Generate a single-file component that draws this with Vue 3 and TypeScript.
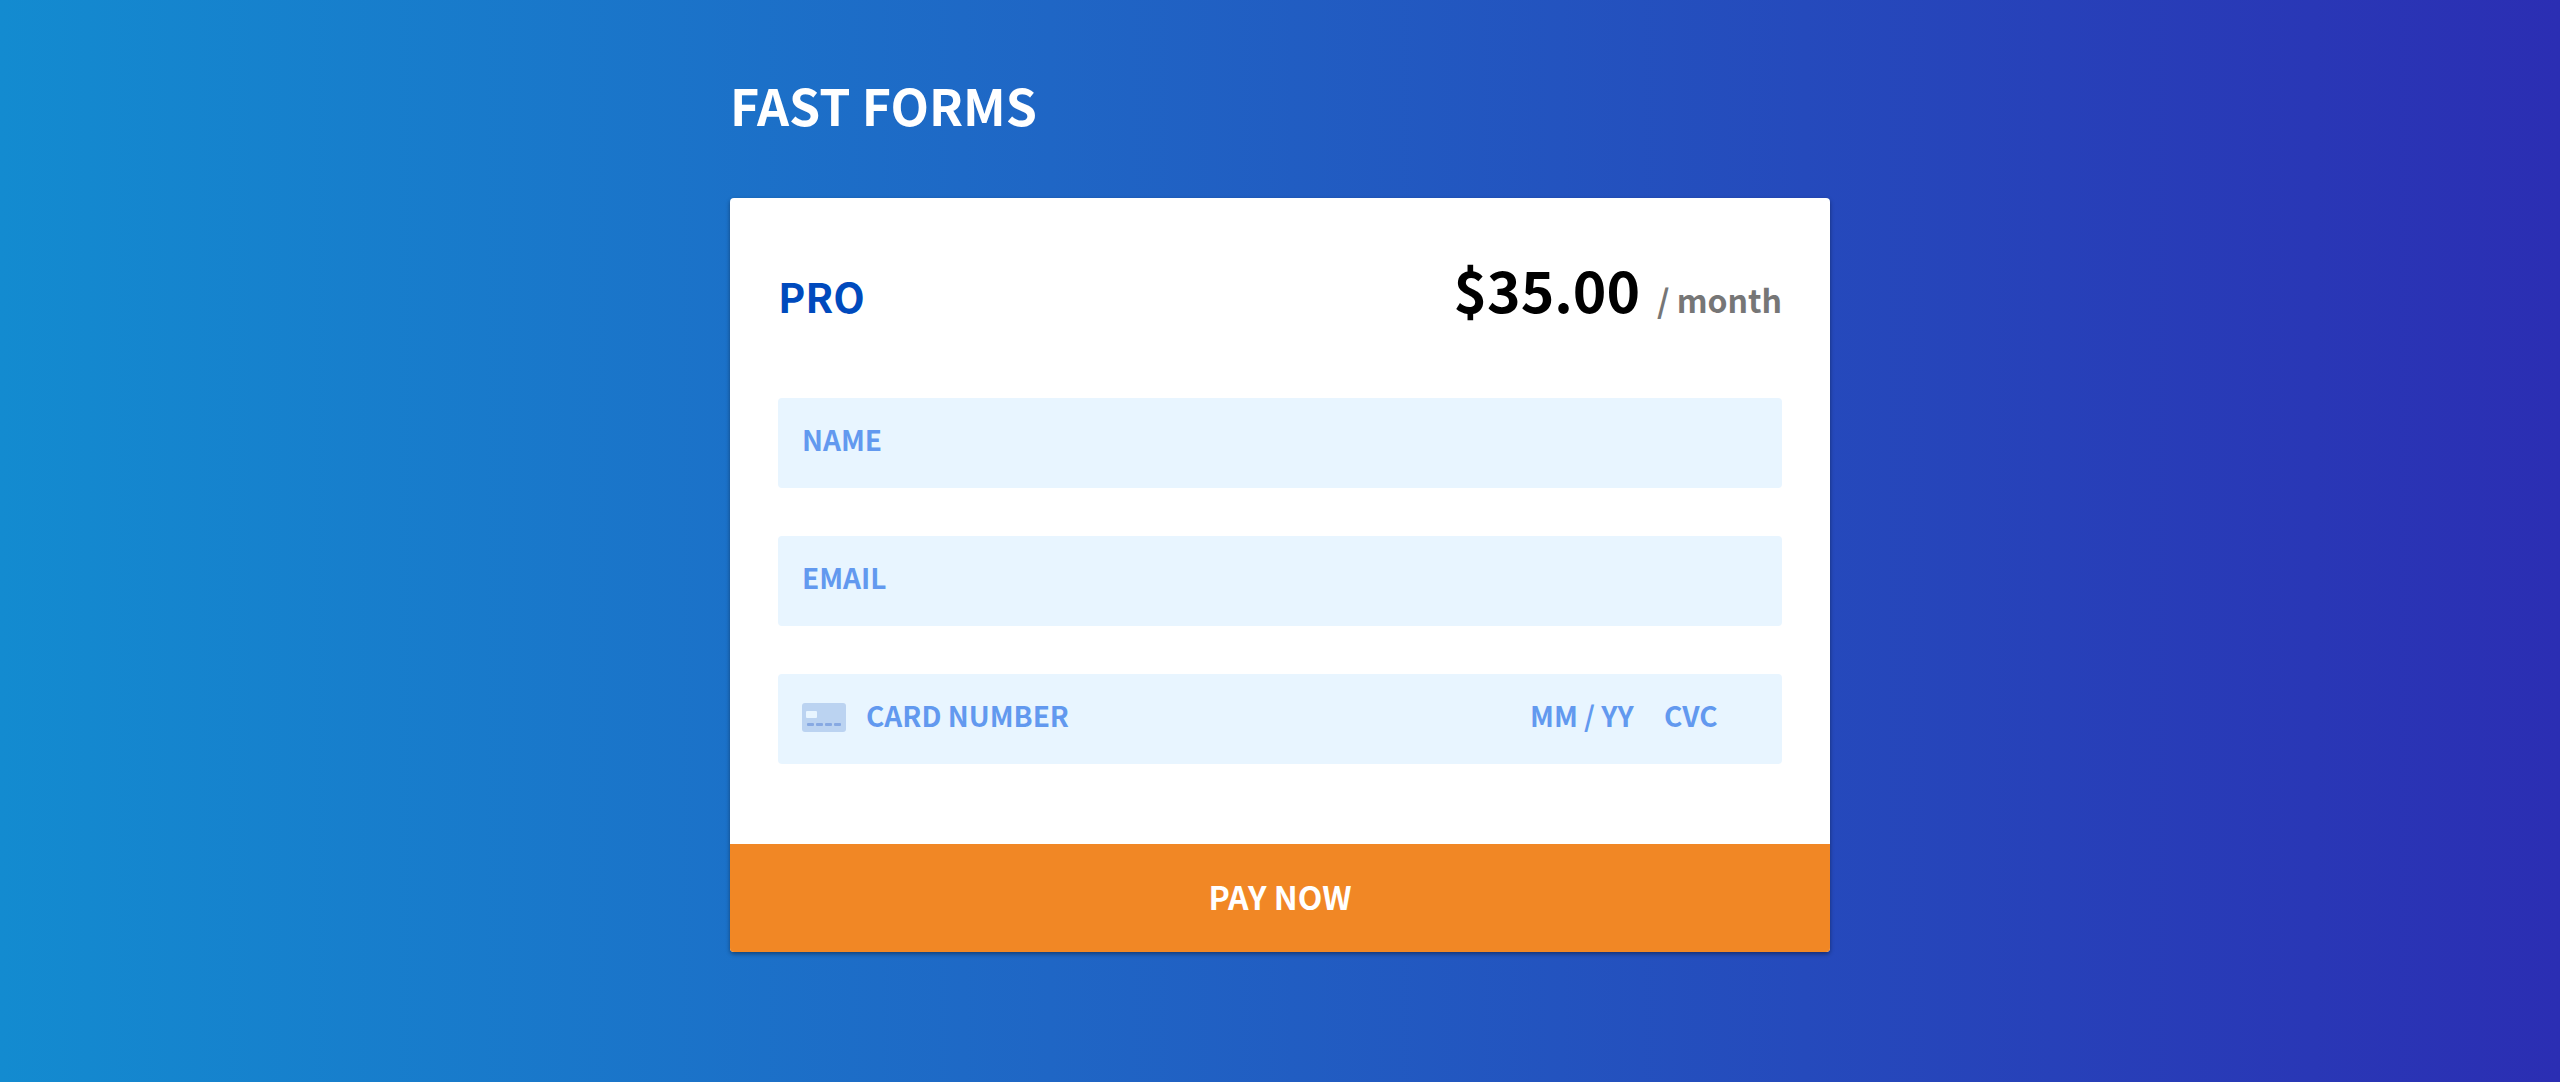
<script setup lang="ts">
import { ref } from 'vue'

const name = ref('')
const email = ref('')
const cardNumber = ref('')
const expiry = ref('')
const cvc = ref('')
</script>

<template>
  <div class="page">
    <main class="checkout">
      <h1 class="title">FAST FORMS</h1>
      <form class="card" @submit.prevent>
        <div class="body">
          <header class="plan">
            <h2 class="plan-name">PRO</h2>
            <p class="price">$35.00 <span class="period">/ month</span></p>
          </header>
          <input v-model="name" class="field" type="text" placeholder="NAME" aria-label="Name" />
          <input v-model="email" class="field" type="email" placeholder="EMAIL" aria-label="Email" />
          <div class="field card-field">
            <svg class="card-icon" viewBox="0 0 44 30" aria-hidden="true">
              <rect width="44" height="29" rx="3" fill="#bbd3f1" />
              <rect x="4" y="8" width="11" height="7" rx="1" fill="#e8f5ff" />
              <g fill="#87a9e2">
                <rect x="5" y="20" width="7" height="3" rx="1" />
                <rect x="14" y="20" width="7" height="3" rx="1" />
                <rect x="23" y="20" width="7" height="3" rx="1" />
                <rect x="32" y="20" width="7" height="3" rx="1" />
              </g>
            </svg>
            <input v-model="cardNumber" class="number" type="text" placeholder="CARD NUMBER" aria-label="Card number" />
            <input v-model="expiry" class="expiry" type="text" placeholder="MM / YY" aria-label="Expiry date" />
            <input v-model="cvc" class="cvc" type="text" placeholder="CVC" aria-label="CVC" />
          </div>
        </div>
        <button class="pay" type="submit">PAY NOW</button>
      </form>
    </main>
  </div>
</template>

<style>
body {
  margin: 0;
}
</style>

<style scoped>
.page {
  box-sizing: border-box;
  min-height: 100vh;
  padding: 68px 24px;
  background: linear-gradient(to right, #138bd0, #1f66c5 41%, #2b2eb3);
  font-family: "Noto Sans CJK SC", "Noto Sans", sans-serif;
  font-weight: 700;
}

.checkout {
  max-width: 1100px;
  margin: 0 auto;
}

.title {
  margin: 0 0 58px;
  color: #fff;
  font-size: 50px;
  font-weight: 700;
  line-height: 72px;
}

.card {
  overflow: hidden;
  border-radius: 4px;
  background: #fff;
  box-shadow: 0 2px 4px rgba(0, 0, 0, 0.4);
}

.body {
  display: flex;
  flex-direction: column;
  gap: 48px;
  padding: 48px 48px 80px;
}

.plan {
  display: flex;
  align-items: baseline;
  justify-content: space-between;
  height: 104px;
  line-height: 84px;
}

.plan-name {
  margin: 0;
  color: #004abd;
  font-size: 41px;
}

.price {
  margin: 0;
  color: #000;
  font-size: 57px;
}

.period {
  margin-left: 4px;
  color: #767676;
  font-size: 32px;
}

input {
  box-sizing: border-box;
  min-width: 0;
  padding: 0;
  border: 0;
  outline: 0;
  background: transparent;
  color: #004abd;
  font: inherit;
  font-size: 28px;
}

input::placeholder {
  color: #6299ef;
  opacity: 1;
}

.field {
  box-sizing: border-box;
  width: 100%;
  height: 90px;
  padding: 0 24px 8px;
  border-radius: 4px;
  background: #e8f5ff;
}

.card-field {
  display: flex;
  align-items: center;
}

.card-icon {
  flex: none;
  width: 44px;
  height: 30px;
  margin: 6px 20px 0 0;
}

.number {
  flex: 1;
}

.expiry {
  width: 134px;
}

.cvc {
  width: 94px;
}

.pay {
  display: block;
  width: 100%;
  height: 108px;
  padding: 0 0 4px;
  border: 0;
  background: #f18725;
  color: #fff;
  font: inherit;
  font-size: 32px;
  cursor: pointer;
}
</style>
